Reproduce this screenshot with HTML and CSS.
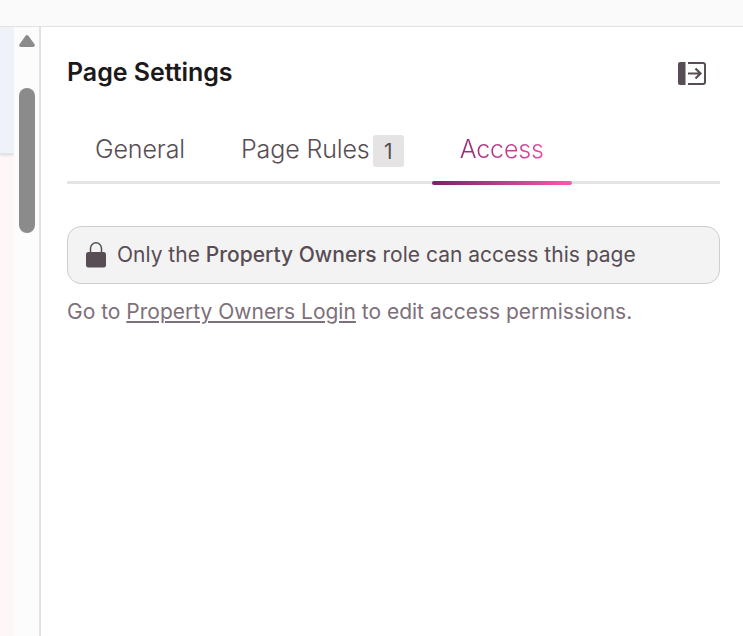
FILE: index.html
```html
<!DOCTYPE html>
<html lang="en">
<head>
    <meta charset="UTF-8">
    <meta name="viewport" content="width=device-width, initial-scale=1.0">
    <title>Page Settings</title>
    <link rel="stylesheet" href="styles.css">
</head>
<body>
    <div class="topbar"></div>
    <div class="workspace">
        <div class="canvas">
            <div class="canvas-header"></div>
        </div>
        <div class="scrollbar">
            <svg class="scroll-arrow" width="16" height="12" viewBox="0 0 16 12">
                <path d="M6.400 .9Q8-.7 9.600 .9L15.500 9.300Q16.500 12 14 12H2Q-.5 12 .5 9.300Z" fill="#8b8b8b"/>
            </svg>
            <div class="scroll-thumb"></div>
        </div>
        <div class="panel">
            <div class="panel-header">
                <h1>Page Settings</h1>
                <button class="collapse-btn" aria-label="Close panel">
                    <svg width="28" height="23" viewBox="0 0 28 23" fill="none">
                        <path d="M2 0H7.500V23H2Q0 23 0 21V2Q0 0 2 0Z" fill="#584d54"/>
                        <path d="M10 1H25Q27 1 27 3V20Q27 22 25 22H10" stroke="#584d54" stroke-width="2"/>
                        <path d="M10 11.500H22M17.500 6.500L22.500 11.500L17.500 16.500" stroke="#584d54" stroke-width="2.200"/>
                    </svg>
                </button>
            </div>

            <div class="tabs">
                <a class="tab">General</a>
                <a class="tab">Page Rules<span class="badge">1</span></a>
                <a class="tab active"><span class="tab-label">Access</span></a>
            </div>

            <div class="notice">
                <svg class="lock" width="20" height="26" viewBox="0 0 20 26">
                    <path d="M4.500 11V6.500A5.500 5.700 0 0 1 15.500 6.500V11" fill="none" stroke="#584d54" stroke-width="1.500"/>
                    <rect y="10" width="20" height="15.500" rx="2.500" fill="#584d54"/>
                </svg>
                <p>Only the <strong>Property Owners</strong> role can access this page</p>
            </div>
            <p class="hint">Go to <a class="link">Property Owners Login</a> to edit access permissions.</p>
        </div>
    </div>
</body>
</html>
```

FILE: styles.css
```css
/* General Styles */
* {
    margin: 0;
    padding: 0;
    box-sizing: border-box;
}

body {
    height: 100vh;
    display: flex;
    flex-direction: column;
    overflow: hidden;
    background-color: white;
    color: #584d54;
    font-family: Inter, sans-serif;
}

.topbar {
    height: 27px;
    background-color: #fafafa;
    border-bottom: 1px solid #e2e2e2;
}

.workspace {
    flex: 1;
    display: flex;
}

/* Canvas edge and scrollbar */
.canvas {
    width: 14px;
    overflow: hidden;
    background-color: #fdf8f7;
}

.canvas-header {
    height: 127px;
    background-color: #eff3f9;
    border-bottom: 1px solid #dfe5eb;
    box-shadow: 0 1px 3px rgba(0, 0, 0, 0.15);
}

.scrollbar {
    width: 25px;
    padding: 8px 4px 0 5px;
    background-color: #fcfcfc;
}

.scroll-arrow {
    display: block;
    margin-bottom: 41px;
}

.scroll-thumb {
    width: 16px;
    height: 145px;
    border-radius: 8px;
    background-color: #8b8b8b;
}

/* Settings panel */
.panel {
    flex: 1;
    padding: 26px 23px 0 26px;
    border-left: 2px solid #e2e2e2;
}

.panel-header {
    height: 40px;
    padding-right: 14px;
    display: flex;
    justify-content: space-between;
    align-items: center;
}

h1 {
    margin-top: -2px;
    font-size: 25px;
    font-weight: 600;
    letter-spacing: -0.05px;
    color: #1c191b;
}

.collapse-btn {
    border: none;
    background: none;
}

.collapse-btn svg {
    display: block;
}

.tabs {
    height: 91px;
    padding-top: 23px;
    display: flex;
    border-bottom: 3px solid #e4e4e4;
}

.tab {
    position: relative;
    height: 65px;
    padding: 0 28px;
    display: flex;
    align-items: center;
    font-size: 25px;
    font-weight: 300;
    letter-spacing: -0.12px;
    white-space: nowrap;
}

.badge {
    width: 31px;
    height: 32px;
    margin: 4px 0 0 3px;
    border-radius: 3px;
    background-color: #e5e3e4;
    font-size: 21px;
    font-weight: 400;
    line-height: 33px;
    text-align: center;
}

.tab-label {
    background: linear-gradient(90deg, #7a206b -33%, #ff58ae 133%);
    background-clip: text;
    -webkit-background-clip: text;
    color: transparent;
}

.tab.active::after {
    content: "";
    position: absolute;
    left: 0;
    right: 0;
    bottom: -4px;
    height: 4px;
    border-radius: 2px;
    background: linear-gradient(90deg, #7a206b, #ff58ae);
}

.notice {
    height: 58px;
    margin-top: 42px;
    padding: 0 18px 2px;
    display: flex;
    align-items: center;
    border: 1px solid #cfcdce;
    border-radius: 14px;
    background-color: #f3f3f3;
    font-size: 21px;
}

.notice strong {
    font-weight: 500;
}

.lock {
    margin: 2px 11px 0 0;
}

.hint {
    margin-top: 15px;
    font-size: 21px;
    line-height: 26px;
    color: #7d707a;
}

.link {
    text-decoration: underline;
}
```
